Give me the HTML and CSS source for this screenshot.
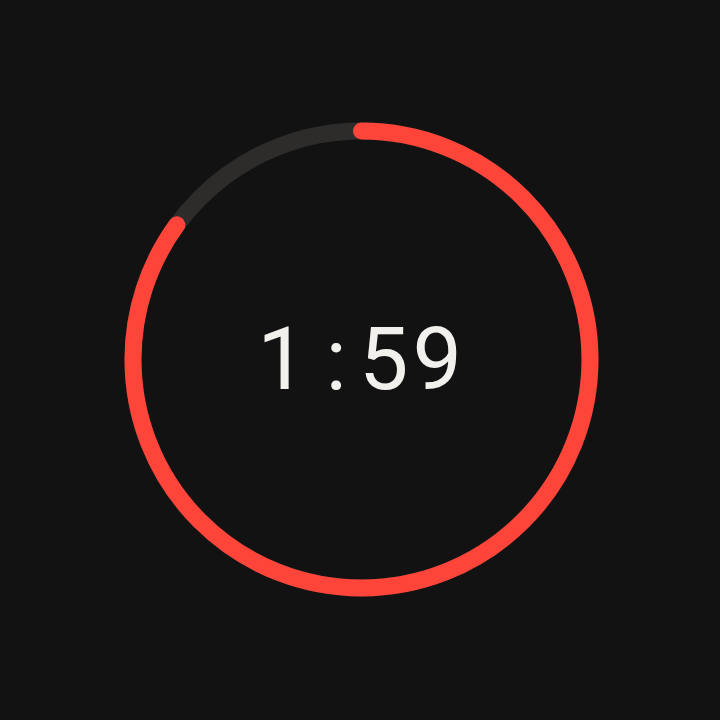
FILE: index.html
```html
<!DOCTYPE html>
<html>
<head>
<meta charset="utf-8">
<link rel="stylesheet" href="styles.css">
</head>
<body>
<main class="timer">
  <svg class="ring" width="720" height="720" viewBox="0 0 720 720" aria-hidden="true">
    <circle class="track" cx="361.5" cy="359.5" r="228.5"/>
    <circle class="progress" cx="361.5" cy="359.5" r="228.5" transform="rotate(-90 361.5 359.5)"/>
  </svg>
  <div class="time"><span class="min">1</span><span class="sep">:</span><span class="sec">59</span></div>
</main>
</body>
</html>
```
FILE: styles.css
```css
html, body {
  margin: 0;
  padding: 0;
  background: #121212;
}
.timer {
  width: 720px;
  height: 720px;
  display: grid;
  place-items: center;
}
.ring, .time {
  grid-area: 1 / 1;
}
.ring {
  display: block;
}
.track {
  fill: none;
  stroke: #2d2c2a;
  stroke-width: 17;
}
.progress {
  fill: none;
  stroke: #ff453a;
  stroke-width: 17;
  stroke-linecap: round;
  stroke-dasharray: 1220.3 2000;
}
.time {
  font-family: Roboto, "Noto Sans", sans-serif;
  font-size: 88px;
  color: #f2f0ec;
  line-height: 1;
  letter-spacing: 4px;
  margin-left: 3px;
  margin-top: -2px;
}
.sep {
  margin-left: 15px;
  margin-right: 8px;
}
```
